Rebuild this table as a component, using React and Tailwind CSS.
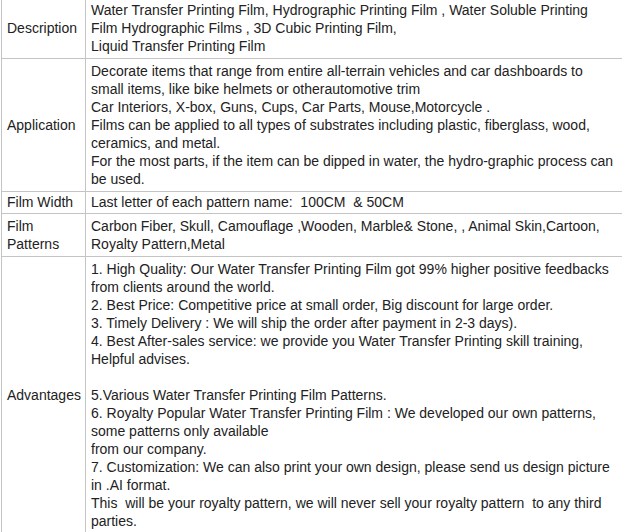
import React from 'react';

const rows = [
  {
    label: 'Description',
    lines: [
      'Water Transfer Printing Film, Hydrographic Printing Film , Water Soluble Printing Film Hydrographic Films , 3D Cubic Printing Film,',
      'Liquid Transfer Printing Film',
    ],
  },
  {
    label: 'Application',
    lines: [
      'Decorate items that range from entire all-terrain vehicles and car dashboards to small items, like bike helmets or otherautomotive trim',
      'Car Interiors, X-box, Guns, Cups, Car Parts, Mouse,Motorcycle .',
      'Films can be applied to all types of substrates including plastic, fiberglass, wood, ceramics, and metal.',
      'For the most parts, if the item can be dipped in water, the hydro-graphic process can be used.',
    ],
  },
  {
    label: 'Film Width',
    compact: true,
    lines: ['Last letter of each pattern name:  100CM  & 50CM'],
  },
  {
    label: 'Film Patterns',
    lines: ['Carbon Fiber, Skull, Camouflage ,Wooden, Marble& Stone, , Animal Skin,Cartoon, Royalty Pattern,Metal'],
  },
  {
    label: 'Advantages',
    lines: [
      '1. High Quality: Our Water Transfer Printing Film got 99% higher positive feedbacks from clients around the world.',
      '2. Best Price: Competitive price at small order, Big discount for large order.',
      '3. Timely Delivery : We will ship the order after payment in 2-3 days).',
      '4. Best After-sales service: we provide you Water Transfer Printing skill training,',
      'Helpful advises.',
      '',
      '5.Various Water Transfer Printing Film Patterns.',
      '6. Royalty Popular Water Transfer Printing Film : We developed our own patterns, some patterns only available',
      'from our company.',
      '7. Customization: We can also print your own design, please send us design picture in .AI format.',
      'This  will be your royalty pattern, we will never sell your royalty pattern  to any third parties.',
    ],
  },
];

const App = () => {
  return (
    <div className="w-[622px] h-[532px] overflow-hidden bg-white font-['Liberation_Sans',Arial,sans-serif] text-[14px] text-[#222]">
      <table className="ml-px mt-[-3px] w-[622px] table-fixed border-collapse">
        <colgroup>
          <col className="w-[84px]" />
          <col />
        </colgroup>
        <tbody>
          {rows.map((row) => (
            <tr key={row.label}>
              <td
                className={`border border-[#c4c4c4] px-[5px] py-[3px] align-middle ${
                  row.compact ? 'leading-[15px]' : 'leading-[18px]'
                }`}
              >
                {row.label}
              </td>
              <td
                className={`border border-[#c4c4c4] px-[5px] py-[3px] align-top ${
                  row.compact ? 'leading-[15px]' : 'leading-[18px]'
                }`}
              >
                {row.lines.map((line, i) =>
                  line ? (
                    <div key={i} className="whitespace-pre-wrap">
                      {line}
                    </div>
                  ) : (
                    <div key={i} className="h-[18px]" />
                  )
                )}
              </td>
            </tr>
          ))}
        </tbody>
      </table>
    </div>
  );
};

export default App;
